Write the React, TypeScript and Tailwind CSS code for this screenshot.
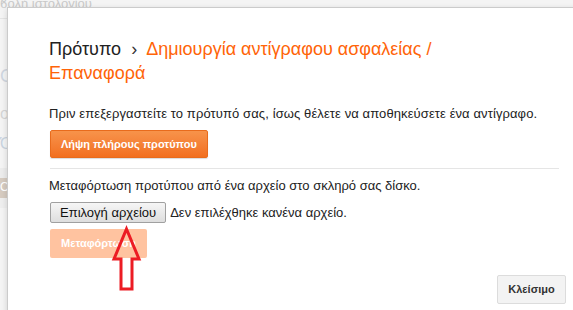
import React from "react";

function Arrow() {
  return (
    <svg
      className="absolute left-[100px] top-[220px]"
      width="50"
      height="80"
      viewBox="100 220 50 80"
    >
      <polygon
        points="126.5,229 139,259 132,259 132,289 121,289 121,259 114,259"
        fill="none"
        stroke="#ec1c24"
        strokeWidth="3"
        strokeLinejoin="miter"
      />
    </svg>
  );
}

function App() {
  return (
    <div className="relative w-[573px] h-[310px] overflow-hidden bg-[#f4f4f4] font-['Liberation_Sans',Arial,sans-serif]">
      {/* page behind the dialog */}
      <div className="flex flex-col w-[40px] h-full">
        <div className="h-[8px] text-[13px] leading-[8px] text-[#c9c9c9] whitespace-nowrap">
          ϐολή ιστολογίου
        </div>
        <div className="mt-[10px] h-[1px] bg-[#e4e4e4]" />
        <div className="mt-[44px] text-[18px] text-[#cfd6df]">O</div>
        <div className="mt-[12px] text-[16px] text-[#d5d5d5]">οι</div>
        <div className="mt-[6px] text-[16px] text-[#c9d3df]">Ό</div>
        <div className="mt-[12px] h-[10px] bg-[#ececec]" />
        <div className="h-[20px] bg-[#d6cbc0] text-[12px] text-white">O</div>
        <div className="h-[10px] bg-[#eeeeee]" />
      </div>

      {/* dialog */}
      <div className="absolute left-[7px] top-[7px] w-[600px] h-[320px] bg-white border border-[#cbcbcb] shadow-[0_2px_6px_rgba(0,0,0,0.15)]">
        <div className="pl-[41px] pt-[29px] pr-[8px]">
          <h2 className="text-[18px] leading-[24px] text-[#222] font-normal w-[420px]">
            Πρότυπο <span className="text-[#333]">&nbsp;›&nbsp;</span>{" "}
            <span className="text-[#ff6408]">Δημιουργία αντίγραφου ασφαλείας / Επαναφορά</span>
          </h2>
          <p className="mt-[21px] text-[13px] leading-[16px] text-[#222] tracking-[0.1px]">
            Πριν επεξεργαστείτε το πρότυπό σας, ίσως θέλετε να αποθηκεύσετε ένα αντίγραφο.
          </p>
          <button className="mt-[8px] ml-[1px] h-[28px] px-[10px] rounded-[2px] border border-[#e86b1c] bg-gradient-to-b from-[#f7934a] to-[#f26f1e] text-white text-[11px] font-bold shadow-[0_1px_1px_rgba(0,0,0,0.15)]">
            Λήψη πλήρους προτύπου
          </button>
          <div className="mt-[10px] ml-[1px] w-[509px] h-[1px] bg-[#e5e5e5]" />
          <p className="mt-[9px] text-[13px] leading-[16px] text-[#222]">
            Μεταφόρτωση προτύπου από ένα αρχείο στο σκληρό σας δίσκο.
          </p>
          <div className="mt-[8px] ml-[1px] flex items-center gap-[4px] text-[13px] text-[#222]">
            <span className="h-[21px] px-[9px] flex items-center rounded-[2px] border border-[#a0a0a0] bg-gradient-to-b from-[#f6f6f6] to-[#dedede] text-[#111]">
              Επιλογή αρχείου
            </span>
            <span>Δεν επιλέχθηκε κανένα αρχείο.</span>
          </div>
          <button
            disabled
            className="mt-[6px] ml-[1px] h-[29px] w-[97px] rounded-[2px] bg-[#ffc3a0] text-white text-[11px] font-bold"
          >
            Μεταφόρτωση
          </button>
        </div>
        <button className="absolute left-[489px] top-[267px] h-[29px] w-[69px] rounded-[2px] border border-[#dcdcdc] bg-[#f3f3f3] text-[#333] text-[11px] font-bold">
          Κλείσιμο
        </button>
      </div>

      <Arrow />
    </div>
  );
}

export default App;
